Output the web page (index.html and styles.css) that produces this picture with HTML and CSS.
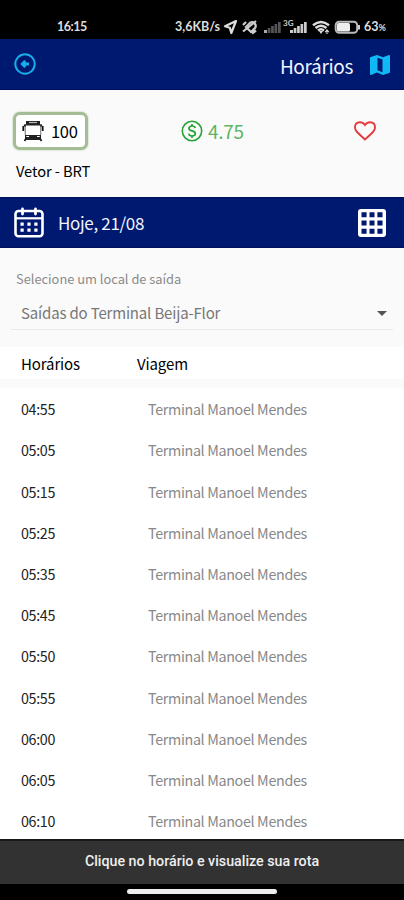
FILE: index.html
```html
<!DOCTYPE html>
<html lang="pt-BR">
<head>
<meta charset="utf-8">
<title>Horários</title>
<link rel="stylesheet" href="styles.css">
</head>
<body>
<div class="phone">
  <div class="status">
    <span class="clock">16:15</span>
    <span class="speed">3,6KB/s</span>
    <svg class="status-icons" width="138" height="20" viewBox="0 0 138 20">
      <path d="M13 4 2 9.300l4.800 1.500L8.300 16z" fill="none" stroke="#ddd" stroke-width="2.200" stroke-linejoin="round"/>
      <g fill="none" stroke="#ccc" stroke-width="2.200"><path d="m23 10 4.500-4.500q3-1 4.500 1.500 1.500 2 0 4l-4 4zM20 8l3-3M29 16.500l4-3"/><path d="m20 14.500 13-10.500"/></g>
      <g fill="#555"><path fill="#aaa" d="M41 13h3v3h-3z"/><path d="M44.700 11H47.400v5h-2.700zM48.100 9h2.700v7h-2.700zM51.500 7h2.700v9h-2.700zM55 5h2.700v11H55z"/></g>
      <g fill="#ccc"><path d="M67 13h3v3h-3zM70.700 11h2.700v5h-2.700zM74.100 9h2.700v7h-2.700zM77.500 7h2.700v9h-2.700zM81 5h2.700v11H81z"/></g>
      <text x="60" y="9" class="net">3G</text>
      <g fill="none" stroke="#ddd" stroke-width="2.400"><path d="M90 8.200q8-6.500 16 0M92.500 11q5.500-4.500 11 0M95 13.500q3-2.500 6 0"/></g>
      <path d="m96 14 2 3 2-3z" fill="#ddd"/><path d="m104 12 2.500 3h-5zM104 17l2-1.500h-4z" fill="#ccc"/>
      <rect x="112.700" y="4.800" width="21.500" height="11" rx="3.500" fill="none" stroke="#bbb" stroke-width="2"/>
      <rect x="114" y="6" width="13" height="8.600" rx="1.500" fill="#eee"/><path d="M136 8v4.500" stroke="#ccc" stroke-width="2"/>
    </svg>
    <span class="battery">63<small>%</small></span>
  </div>

  <header class="appbar">
    <svg class="back" width="22" height="22" viewBox="0 0 22 22" fill="none" stroke="#17aeea"><circle cx="11" cy="11" r="9.700" stroke-width="2"/><path d="M15 11H8.500M11.300 8 8.300 11l3 3" stroke-width="2.800"/></svg>
    <h1>Horários</h1>
    <svg class="map" width="20" height="20" viewBox="0 0 20 20"><path fill="#10b8f5" fill-rule="evenodd" d="M19.300 0h-.3l-6 2.200L7 0 .8 2q-.8.200-.8.900v16.400q0 .7.800.6L7 17.600l6 2.400 6.200-2.100q.8-.2.800-.9V.7q0-.7-.7-.7zM7.500 2.800l5 1.800v12.600l-5-1.900z"/></svg>
  </header>

  <section class="line">
    <div class="badge">
      <svg width="22" height="22" viewBox="0 0 22 22"><path d="M4 1h14v4.500H4zM3 15h16v3.500H3z" fill="#222"/><path d="M7 2.500h8" stroke="#bbb" stroke-width="1.200"/><path d="M3.300 4v11M18.700 4v11" stroke="#888" stroke-width="1.200"/><path d="M1.300 6v5M20.700 6v5M2.800 4.500v2M19.200 4.500v2" stroke="#111" stroke-width="1.800"/><path d="M4 16.500h3M15 16.500h3" stroke="#fff"/><path d="m5 17-2.500 4M17 17l2.500 4M4 19h14" stroke="#222" stroke-width="1.900"/></svg>
      <span>100</span>
    </div>
    <div class="fare">
      <svg width="22" height="22" viewBox="0 0 22 22" fill="none" stroke="#27a336"><circle cx="11" cy="11" r="9.700" stroke-width="1.600"/><path d="M14.200 8q-.4-2-3.200-2T7.900 8.300q0 1.900 3.100 2.600 3.300.7 3.300 2.800T11 16q-3 0-3.300-2.300M11 4v2M11 16v2" stroke-width="1.700"/></svg>
      <span>4.75</span>
    </div>
    <svg class="heart" width="22" height="20" viewBox="0 0 22 20" fill="none" stroke="#e5393c" stroke-width="1.900"><path d="M11 18.500 4.800 12.800Q1 9.300 1 6.200 1 1.300 5.900 1.200 9 1.200 11 4q2-2.800 5.100-2.800Q21 1.300 21 6.200q0 3.100-3.800 6.600z"/></svg>
    <p>Vetor - BRT</p>
  </section>

  <section class="datebar">
    <svg width="30" height="31" viewBox="0 0 30 31" fill="none" stroke="#fff"><rect x="1.500" y="4" width="27" height="25.300" rx="3" stroke-width="2.600"/><path d="M2 11.300h26" stroke-width="2.200"/><path d="M8.500 2v5M21.500 2v5" stroke-width="2.800" stroke-linecap="round"/><path d="M6.500 17.200h3.200m3.700 0h3.200m3.700 0h3.200M6.500 23.200h3.200m3.700 0h3.200m3.700 0h3.200" stroke-width="3.200"/></svg>
    <span>Hoje, 21/08</span>
    <svg class="grid" width="28" height="28" viewBox="0 0 28 28"><rect width="28" height="28" rx="3" fill="#fff"/><path d="M3.500 5.800h5.100m2.900 0h5m2.900 0h5.100M3.500 14h5.100m2.900 0h5m2.900 0h5.100M3.500 22.200h5.100m2.900 0h5m2.900 0h5.100" stroke="#001970" stroke-width="5"/></svg>
  </section>

  <section class="origin">
    <label>Selecione um local de saída</label>
    <div class="select"><span>Saídas do Terminal Beija-Flor</span><i></i></div>
  </section>

  <div class="thead"><span>Horários</span><span>Viagem</span></div>
  <div class="rows">
    <div class="row"><b>04:55</b><span>Terminal Manoel Mendes</span></div>
    <div class="row"><b>05:05</b><span>Terminal Manoel Mendes</span></div>
    <div class="row"><b>05:15</b><span>Terminal Manoel Mendes</span></div>
    <div class="row"><b>05:25</b><span>Terminal Manoel Mendes</span></div>
    <div class="row"><b>05:35</b><span>Terminal Manoel Mendes</span></div>
    <div class="row"><b>05:45</b><span>Terminal Manoel Mendes</span></div>
    <div class="row"><b>05:50</b><span>Terminal Manoel Mendes</span></div>
    <div class="row"><b>05:55</b><span>Terminal Manoel Mendes</span></div>
    <div class="row"><b>06:00</b><span>Terminal Manoel Mendes</span></div>
    <div class="row"><b>06:05</b><span>Terminal Manoel Mendes</span></div>
    <div class="row"><b>06:10</b><span>Terminal Manoel Mendes</span></div>
  </div>

  <footer class="toast">Clique no horário e visualize sua rota</footer>
  <div class="navbar"><i></i></div>
</div>
</body>
</html>
```
FILE: styles.css
```css
* { box-sizing: border-box; }
body { margin: 0; background: #fff; font-family: "Noto Sans CJK JP", "Noto Sans", sans-serif; }
h1, p { margin: 0; font-weight: 400; }
svg { display: block; flex: none; }
span, b, label { white-space: nowrap; }
.phone { width: 404px; height: 900px; display: flex; flex-direction: column; overflow: hidden; }
.phone > * { flex: none; }

.status { height: 39px; padding: 16px 14px 0 57px; background: #000; color: #ddd; display: flex; font: 700 12.500px/22px Lato, sans-serif; }
.clock { width: 118px; letter-spacing: -.5px; }
.speed { width: 48px; }
.status-icons { margin-top: 1px; }
.battery { margin-left: 3px; }
.battery small { font-size: 9px; }
.net { font: 700 8px Lato, sans-serif; fill: #ccc; }

.appbar { height: 51px; padding: 0 14px; background: #001970; color: #f2f4ff; display: flex; align-items: center; border-bottom: 1px solid #00105c; }
.appbar h1 { margin-left: auto; margin-right: 17px; font-size: 19px; line-height: 28px; padding-top: 3px; letter-spacing: -.35px; }
.map { margin-top: 2px; }

.line { height: 107px; padding: 21px 28px 0 13px; background: #fafafa; display: grid; grid-template-columns: 168px 1fr 22px; grid-template-rows: 39px auto; row-gap: 9px; align-items: center; align-content: start; }
.badge { width: 75px; height: 38px; border: 3px solid #a5bd96; border-radius: 7px; background: #fff; box-shadow: 0 0 2px #a5bd96; display: flex; align-items: center; gap: 7px; padding-left: 6px; font-size: 16.500px; line-height: 24px; letter-spacing: -.3px; }
.fare { display: flex; align-items: center; gap: 5px; color: #5cb563; font-size: 19px; line-height: 28px; letter-spacing: -.3px; }
.line p { font-size: 14.700px; line-height: 24px; padding-left: 3px; grid-column: 1 / -1; letter-spacing: -.1px; }

.datebar { height: 51px; padding: 0 18px 0 14px; background: #001970; color: #f2f4ff; display: flex; align-items: center; border-top: 1px solid #00105c; border-bottom: 1px solid #00105c; font-size: 17px; line-height: 26px; letter-spacing: -.33px; }
.datebar span { margin-left: 14px; }
.grid { margin-left: auto; }

.origin { height: 99px; padding: 20px 11px 0; background: #fafafa; }
.origin label { display: block; padding-left: 5px; color: #8a8a8a; font-size: 12.850px; line-height: 22px; }
.select { height: 40px; padding: 7px 6px 0 10px; display: flex; align-items: center; justify-content: space-between; border-bottom: 1px solid #e9e9e9; color: #777; font-size: 15px; line-height: 24px; letter-spacing: -.17px; }
.select i { border: 5px solid transparent; border-top-color: #555; border-bottom: 0; }

.thead { height: 41px; padding-left: 21px; background: #fff; border-bottom: 9px solid #fafafa; display: flex; font-size: 15px; line-height: 34px; letter-spacing: -.12px; }
.thead span:first-child { width: 116px; }
.rows { height: 451px; background: #fff; }
.row { height: 41.200px; padding-left: 21px; display: flex; align-items: center; font-size: 14.300px; line-height: 24px; letter-spacing: -.33px; }
.rows { padding-top: .6px; }
.row b { width: 127px; font-weight: 400; color: #222; }
.row span { color: #888; }

.toast { height: 45px; background: #323232; border-top: 2px solid #181818; color: #eee; text-align: center; font: 500 14.250px/41px Roboto, sans-serif; }
.navbar { height: 16px; background: #000; display: flex; justify-content: center; padding-top: 5px; }
.navbar i { width: 150px; height: 5px; border-radius: 3px; background: #eee; }
```
